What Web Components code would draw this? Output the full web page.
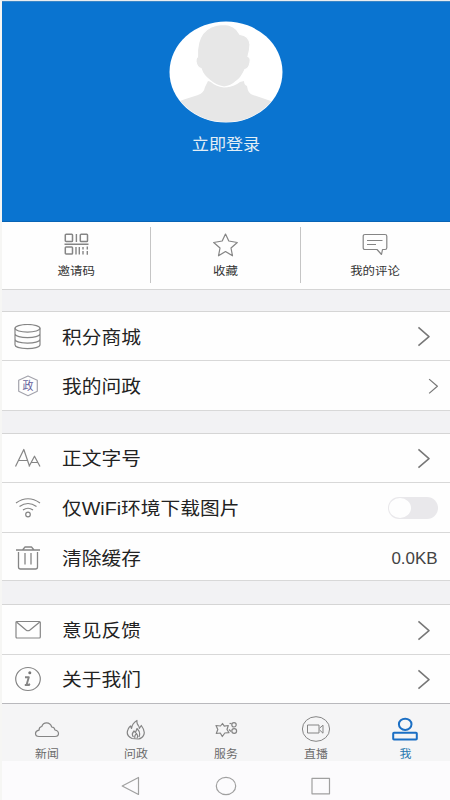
<!DOCTYPE html>
<html lang="zh-CN">
<head>
<meta charset="utf-8">
<title>我</title>
<style>
html,body{margin:0;padding:0}
body{width:450px;height:800px;overflow:hidden;background:#f3f3f3;font-family:"Liberation Sans","Noto Sans CJK SC",sans-serif}
</style>
</head>
<body>
<profile-page></profile-page>
<script>
const ICONS = {
  qr: [26,24,'<g stroke-width="1.5"><rect x="1.3" y="1.3" width="7.2" height="7.2" rx=".8"/><rect x="16.3" y="1.3" width="7.2" height="7.2" rx=".8"/><rect x="1.3" y="14" width="7.2" height="7" rx=".8"/><path d="M12.4 1v8M0.5 11.3h24M12 14v7.6M15.3 14v7.6M19 14v2.6M19 18v3.6M23.300 13.5v3M23.300 18v3.800" stroke-width="1.4"/></g>'],
  star: [26,24,'<path d="M12.500 1l3.3 7 8.500 1.500-6.300 5.500 1.500 7.800-7-4.300-7 4.300 1.500-7.800L.7 9.500 9.200 8z"/>'],
  comment: [26,24,'<path d="M3 1.500h20q1.800 0 1.800 1.800v11.400q0 1.800-1.800 1.800h-2.500l-1 5-4.500-5H3q-1.800 0-1.800-1.800V3.300Q1.200 1.500 3 1.500zM5 7.500h15.500M5 11.500h9"/>'],
  coins: [28,26,'<ellipse cx="13.500" cy="4.300" rx="12.500" ry="3.800"/><path d="M1 4.300v16.500c0 5 25 5 25 0V4.300M1 9.800c0 5 25 5 25 0M1 15.300c0 5 25 5 25 0"/>'],
  hex: [24,24,'<path d="M12 2l9.300 4.300v11L12 21.700l-9.300-4.400v-11z" stroke="#a3a3ac"/><text x="12" y="16" text-anchor="middle" font-size="11" fill="#66619c" stroke="none">政</text>'],
  type: [28,24,'<path d="M1.500 20.500L9.800 3.500l5.800 17M4.500 14.500h9M15 20.500l5.500-10.300 5.500 10.300M17.300 16.500h6.700"/>'],
  wifi: [28,26,'<path d="M2 8q12-8.500 24 0M5.500 11.500q8.500-6 17 0M9 15q5-3.500 10 0"/><circle cx="14" cy="19.500" r="2.300"/>'],
  trash: [28,26,'<path d="M2 5h24M8.500 5l2.500-3h6.500l2.500 3M4.500 7v15q0 2 2 2h15q2 0 2-2V7M11 8v11.500M17 8v11.500" stroke-width="1.300"/>'],
  mail: [28,22,'<rect x="2" y="2.500" width="24.300" height="16.500" rx="1"/><path d="M2.500 3l9.500 8q2 1.500 4 0l9.800-8"/>'],
  info: [28,26,'<ellipse cx="14" cy="13" rx="12.300" ry="11.500"/><circle cx="15.800" cy="6.800" r="1.500" fill="#777" stroke="none"/><path d="M11 11.300h3.800l-2 6.700q0 1.500 3.300 0M10.800 19h5" stroke-width="1.900"/>'],
  cloud: [26,18,'<path d="M5 15.500Q1.500 15.500 1.500 12.500 1.500 10 5 9.200 5 6 7.800 5.500 9 1.800 12.500 1.800 16.500 1.800 17.700 6q3 .3 3.200 3 3.600.8 3.600 3.500 0 3-3.500 3z"/>'],
  fire: [22,22,'<path d="M7 19.500C2.500 17.500 1.500 14 3 10.500Q4 8 5.500 7l1 2.500Q7 4.500 12 1.500q-.5 3 1.300 5 1.200 1.500 1 3l2-3q4.500 6 2.200 10-1.500 3-5 3.500zM8.500 18q-2.500-2.500.5-6l1.500 1.500 1.500-4q4 4 2 8.500M10 19q-1-2 1.500-4.500 2 2.500.5 4.500"/>'],
  service: [24,20,'<path d="M8.500 3.500l1.800 2.700 4-.7-1.300 4 2 3.200-4.200.3-2.500 3.500-2-3.500-4 .5 1.500-4L2 5.500l4.500.5zM15 9.500l2 2"/><path d="M15.500 3.500h2"/><circle cx="20" cy="4.800" r="2.200"/><circle cx="20.200" cy="11" r="2.400"/>'],
  live: [30,28,'<ellipse cx="15" cy="13" rx="13.600" ry="12.300" stroke-width="1"/><rect x="6.500" y="9" width="11.500" height="8" stroke-width="1"/><path d="M18.500 12.200l3.500-3v8l-3.500-3.300" stroke-width="1"/>'],
  person: [28,26,'<ellipse cx="14.200" cy="7.300" rx="6.300" ry="5.600" stroke-width="2"/><rect x="2.200" y="15.800" width="23.600" height="6.800" rx=".8" stroke-width="2"/>'],
  back: [20,22,'<path d="M17.500 2.500v17L1.200 11z"/>'],
  home: [22,20,'<ellipse cx="11" cy="10" rx="9.700" ry="8.600"/>'],
  recent: [20,20,'<rect x="1" y="2.300" width="17.500" height="15.500"/>'],
  chevron: [14,22,'<path d="M1.500 1.500L12.500 11 1.500 20.500" stroke-width="1.600"/>']
};
function define(name, render){
  customElements.define(name, class extends HTMLElement{
    connectedCallback(){
      if(this.shadowRoot) return;
      this.attachShadow({mode:'open'}).innerHTML = render(this);
    }
  });
}
define('line-icon', el => {
  const [w,h,body] = ICONS[el.getAttribute('name')];
  const k = +(el.getAttribute('scale') || 1);
  return `<style>:host{display:block;flex:none;width:${w*k}px;height:${h*k}px;color:var(--icon,#858585)}svg{display:block}</style>
  <svg width="${w*k}" height="${h*k}" viewBox="0 0 ${w} ${h}" fill="none" stroke="currentColor" stroke-width="1.200" stroke-linejoin="round">${body}</svg>`;
});
define('wide-text', () => `<style>:host{display:block;white-space:nowrap}span{display:block;transform:scaleX(var(--stretch,1.095));transform-origin:var(--origin,left)}</style><span><slot></slot></span>`);
define('profile-header', () => `<style>
:host{display:flex;flex-direction:column;align-items:center;height:221px;box-sizing:border-box;padding-top:19px;background:#0a74d0;border-top:1px solid #3b86c6;border-bottom:1px solid #0864b5}
svg{display:block}
wide-text{margin-top:9px;font-size:16px;line-height:26px;color:#e3eef5;--origin:center;--stretch:1.070}
</style>
<svg width="114" height="102" viewBox="0 0 114 102"><defs><clipPath id="c"><ellipse cx="57" cy="51" rx="56" ry="50"/></clipPath></defs>
<ellipse cx="57" cy="51" rx="56.500" ry="50.500" fill="#fff"/><g clip-path="url(#c)" fill="#e7e7e7">
<path d="M0 84l15-5.500 14-4.500q6-2 7-8l3-6 4 1q6 5 14 5t14-5l4-1q0 4 3 5 1 8 6 9l15 5 15 6v19H0z"/>
<path d="M28.500 36Q27 5 54 3.500q12 0 17 10 9 1 10 10 0 5-2 12 3 1 2 6-1 6-5 7-4 9-9 12-5 5-12 5.500-8-1-14-6.500-7-5-9-12-4-1-5-7 0-4 1.500-4.500z" stroke="#fff" stroke-width="1.200"/></g></svg>
<wide-text>立即登录</wide-text>`);
define('quick-action', el => `<style>
:host{display:flex;flex:1;flex-direction:column;align-items:center;padding-top:11px;position:relative}
:host(:not(:last-child))::after{content:"";position:absolute;right:0;top:5px;width:1px;height:56px;background:#c5c5c5}
wide-text{margin-top:5px;font-size:11.500px;line-height:18px;color:#333;--origin:center;--stretch:1.080}
</style><line-icon name="${el.getAttribute('icon')}"></line-icon><wide-text><slot></slot></wide-text>`);
define('quick-actions', () => `<style>:host{display:flex;height:68px;box-sizing:border-box;background:#fefefe;border-bottom:1px solid #d5d5d5}</style><slot></slot>`);
define('menu-group', () => `<style>:host{display:block;margin-top:22px;border-top:1px solid #d5d5d5;background:#fefefe}</style><slot></slot>`);
define('toggle-switch', () => `<style>:host{display:flex;width:50px;height:22px;border-radius:11px;background:#e9e8eb}i{width:22px;height:20px;margin:1px;border-radius:50%;background:#fefefe}</style><i></i>`);
define('menu-row', el => `<style>
:host{display:flex;align-items:center;height:var(--h,49.300px);box-sizing:border-box;border-bottom:1px solid #d8d8d8;padding:var(--pt,1px) var(--pr,20px) 0 0}
.ic{width:51px;display:flex;justify-content:center;margin-right:9px}
.t{font-size:18px;line-height:28px;color:#222;flex:1;padding-top:2px}
</style><div class="ic"><line-icon name="${el.getAttribute('icon')}"></line-icon></div><wide-text class="t"><slot></slot></wide-text><slot name="end"><line-icon name="chevron" style="--icon:#777" scale="${el.getAttribute('arrow')||.96}"></line-icon></slot>`);
define('tab-item', el => `<style>
:host{display:flex;flex:1;flex-direction:column;align-items:center;color:var(--tab,#6a6a6a)}
.ic{flex:none;height:28px;margin-top:12px;display:flex;align-items:center}
wide-text{font-size:11px;line-height:14px;margin-top:3px;--origin:center;--stretch:1.080}
</style><div class="ic"><line-icon name="${el.getAttribute('icon')}"></line-icon></div><wide-text><slot></slot></wide-text>`);
define('tab-bar', () => `<style>:host{display:flex;height:57px;box-sizing:border-box;background:#f5f5f6}</style><slot></slot>`);
define('system-nav', () => `<style>:host{display:flex;height:39px;align-items:center;justify-content:center;gap:74px;padding:10px 0 0 0;box-sizing:border-box;background:#fcfbfd;--icon:#a0a0a0}</style>
<line-icon name="back"></line-icon><line-icon name="home"></line-icon><line-icon name="recent"></line-icon>`);
define('profile-page', () => `<style>
:host{display:block;height:800px;box-sizing:border-box;border-left:2px solid #f6f6f4;border-top:1px solid #e9edf0;background:#f2f2f4}
.kb{font-size:16px;color:#444;padding-top:1px;--origin:right;--stretch:1.060}
</style>
<profile-header></profile-header>
<quick-actions><quick-action icon="qr">邀请码</quick-action><quick-action icon="star">收藏</quick-action><quick-action icon="comment">我的评论</quick-action></quick-actions>
<menu-group style="margin-top:21px"><menu-row icon="coins">积分商城</menu-row><menu-row icon="hex" arrow="0.75" style="--pr:12px;--pt:2px">我的问政</menu-row></menu-group>
<menu-group><menu-row icon="type">正文字号</menu-row><menu-row icon="wifi" style="--pr:12px;--h:50px;--pt:2px">仅WiFi环境下载图片<toggle-switch slot="end"></toggle-switch></menu-row><menu-row icon="trash" style="--pr:12px;--h:48.600px;--pt:3px">清除缓存<wide-text class="kb" slot="end">0.0KB</wide-text></menu-row></menu-group>
<menu-group style="margin-top:23px"><menu-row icon="mail">意见反馈</menu-row><menu-row icon="info" style="border-color:#b9b9bd">关于我们</menu-row></menu-group>
<tab-bar><tab-item icon="cloud">新闻</tab-item><tab-item icon="fire">问政</tab-item><tab-item icon="service">服务</tab-item><tab-item icon="live">直播</tab-item><tab-item icon="person" style="--icon:#1b6fc4;--tab:#2878b0">我</tab-item></tab-bar>
<system-nav></system-nav>`);
</script>
</body>
</html>
